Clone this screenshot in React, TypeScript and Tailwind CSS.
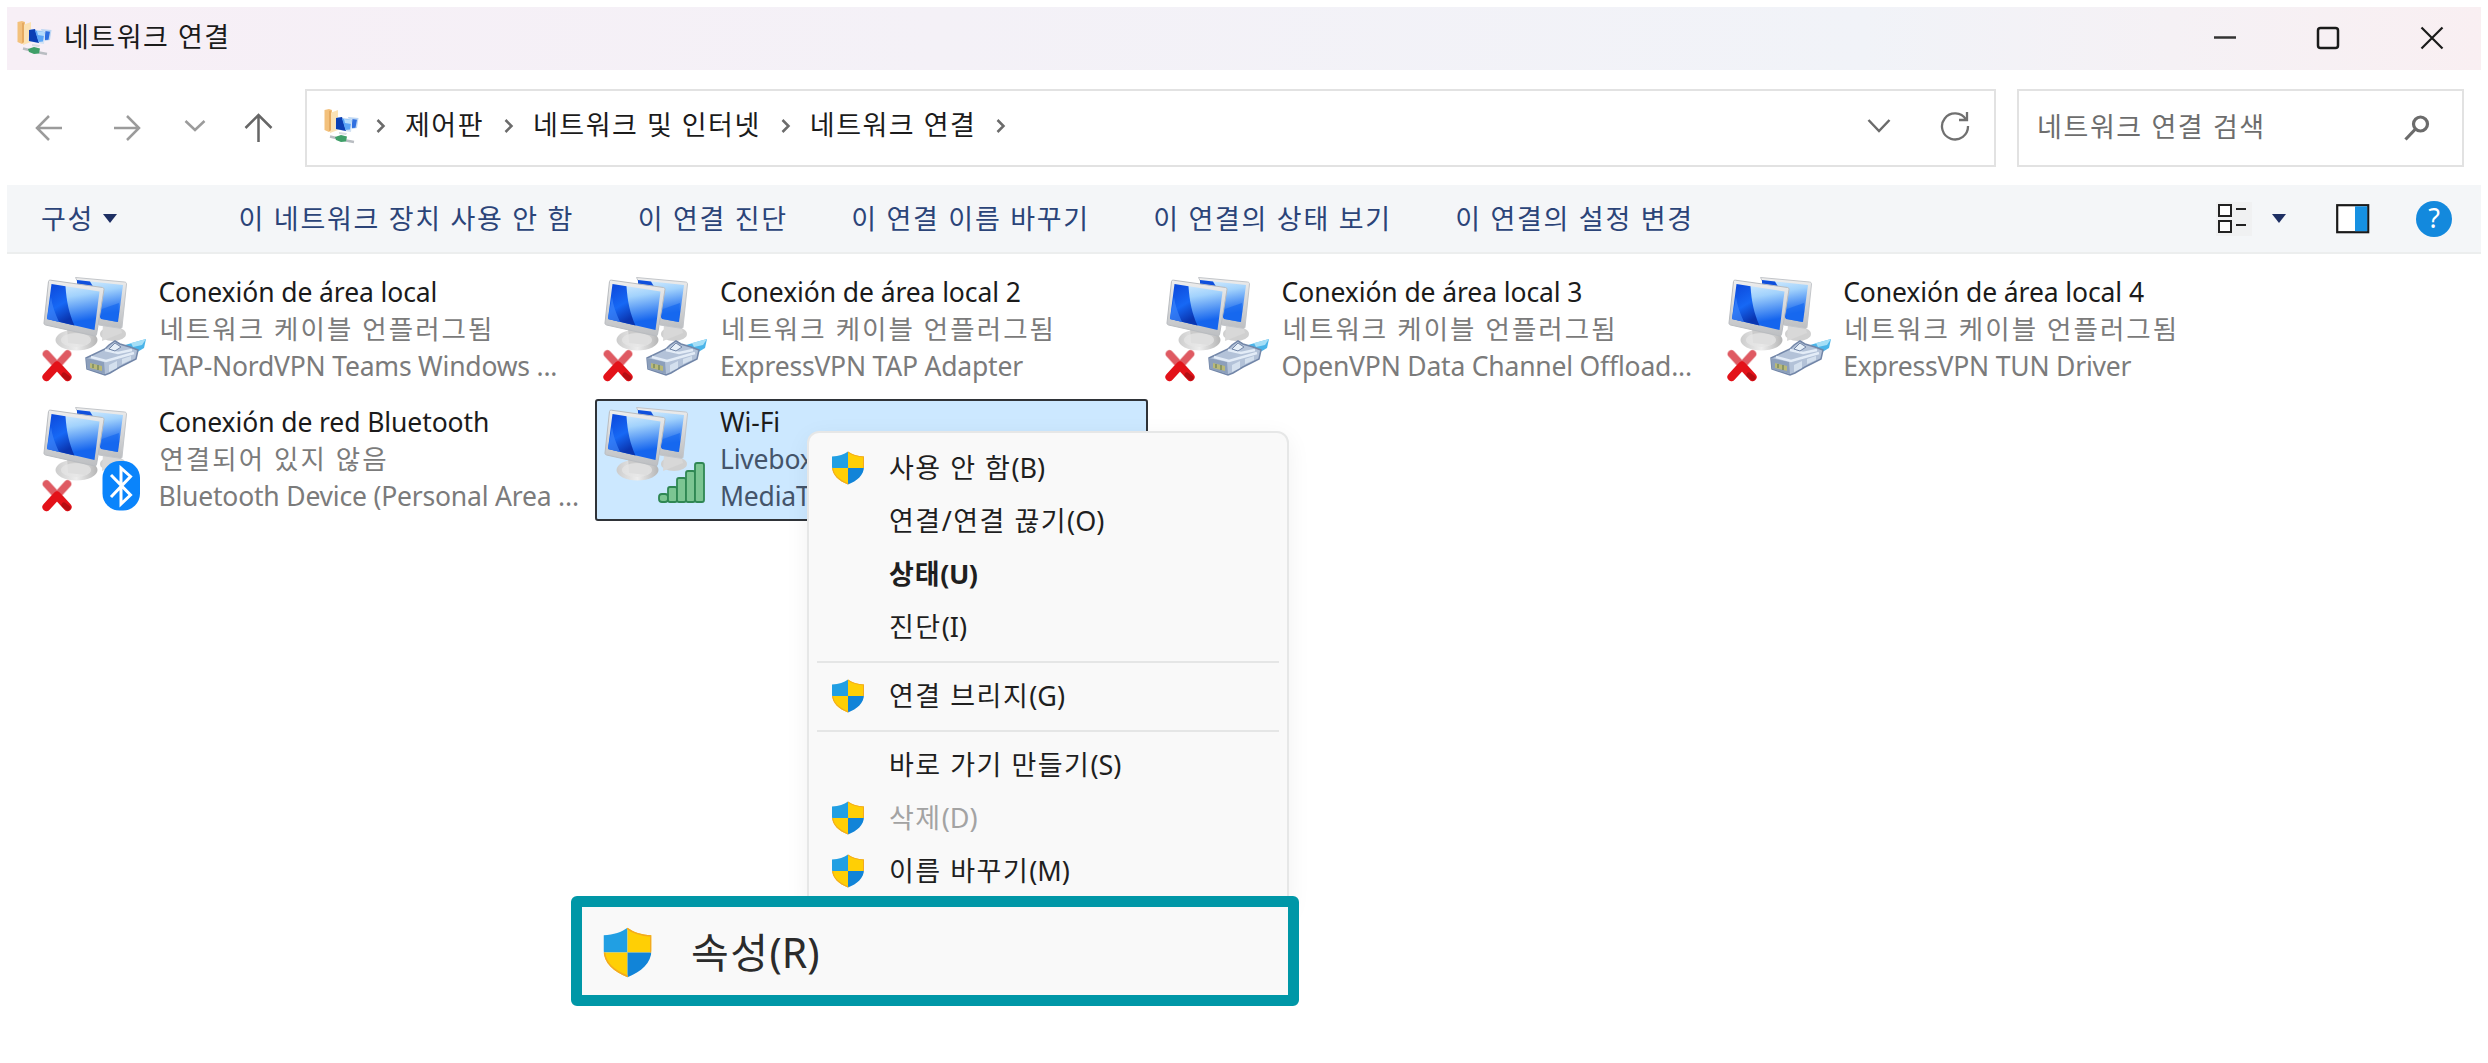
import React from "react";

const FolderIcon = () => (
    <svg width="36" height="36" viewBox="0 0 36 36">
        <path d="M.500 2l4.500-1 3 1v20l-3 2-4.500-2z" fill="#f3c17c"/>
        <path d="M6 5l8-3v20l-8 3z" fill="#fbe2b4"/>
        <path d="M5 3l2-.4v19.8L5 23z" fill="#e5aa60"/>
        <path d="M24 9l10.500 1-1.500 10-5 1z" fill="#bcd6f3"/>
        <path d="M28 11l5 .700-1.500 8-3.500.300z" fill="#2f6fe0"/>
        <path d="M13 9l15.500 2-1.500 13-7-1-9-2z" fill="#d3e2f4"/>
        <path d="M12 10l6-1 4 14-10-2z" fill="#0a3fb4"/>
        <path d="M18 10.500l9.500 1.500-1.500 9.500-4.500.500z" fill="#5aa5f7"/>
        <path d="M20 11l7.500 1-.500 4-6-1z" fill="#b5dcfc"/>
        <path d="M15 24l8 1-1 2-7-1z" fill="#d9dde2"/>
        <path d="M6 28.500l6 1.500M22 32.500l8 1.500" stroke="#b9bdc2" strokeWidth="2.500"/>
        <path d="M11 29l6-2 6 1.500-1 5-5 .500-5-2z" fill="#3f9f68"/>
    </svg>
);

const Shield = ({size}: { size: number }) => (
    <svg width={size} height={size} viewBox="0 0 34 34">
        <defs>
            <clipPath id="shield">
                <path d="M17 .500c4 3 9 4.500 16 5v10c0 8.500-7 14.500-16 18C8 30 1 24 1 15.500v-10c7-.500 12-2 16-5z"/>
            </clipPath>
        </defs>
        <g clipPath="url(#shield)">
            <path d="M0 0h17v17H0z" fill="#219fe3"/>
            <path d="M17 0h17v17H17z" fill="#ffcf05"/>
            <path d="M0 17h17v17H0z" fill="#ffcf05"/>
            <path d="M17 17h17v17H17z" fill="#1184d8"/>
            <path d="M17 .500c4 3 9 4.500 16 5v11.500" fill="none" stroke="#f2a922" strokeWidth="2"/>
            <path d="M1 17C1.500 25 8 30 17 33.500" fill="none" stroke="#f2a922" strokeWidth="2.500"/>
        </g>
    </svg>
);

const Computers = () => (
    <>
        <defs>
            <linearGradient id="screen" x1="0" y1="0" x2=".2" y2="1">
                <stop offset="0" stopColor="#d9efff"/>
                <stop offset=".35" stopColor="#a2d2fc"/>
                <stop offset=".9" stopColor="#1565ee"/>
            </linearGradient>
            <linearGradient id="shade" x1="0" y1="0" x2=".4" y2="1">
                <stop offset="0" stopColor="#0b45d8"/>
                <stop offset=".6" stopColor="#1668f5"/>
                <stop offset="1" stopColor="#0a35b0"/>
            </linearGradient>
            <linearGradient id="stand" x1="0" y1="0" x2="1" y2="0">
                <stop offset="0" stopColor="#cccccc"/>
                <stop offset=".5" stopColor="#ededed"/>
                <stop offset="1" stopColor="#b5b5b5"/>
            </linearGradient>
            <linearGradient id="frame" x1="0" y1="0" x2="0" y2="1">
                <stop offset="0" stopColor="#eeeeee"/>
                <stop offset="1" stopColor="#bdbfc2"/>
            </linearGradient>
        </defs>
        <ellipse cx="72" cy="61" rx="13" ry="7" fill="#d0d0d0"/>
        <path d="M62 50l17 2 2 8-20 8z" fill="#d8d8d8"/>
        <path d="M34.500 4.500l49 4.500c1.500.200 2 1 2 2l-4.500 43c0 1-1 1.500-2 1.300L58 52z" fill="url(#frame)" stroke="#c3c6ca"/>
        <path d="M36 7l46 5-5 37-17-3z" fill="url(#screen)"/>
        <path d="M36 7l13 1.500 3 5L36 12z" fill="#0f4fdc"/>
        <path d="M61 36l17-6-2 19-15-3z" fill="#176af0" fillOpacity=".7"/>
        <ellipse cx="35.500" cy="67" rx="21" ry="10.500" fill="url(#stand)"/>
        <path d="M26 54l22 4-3 14-18-2z" fill="#cbcbcb"/>
        <ellipse cx="35" cy="67" rx="15" ry="7" fill="#e6e6e6" fillOpacity=".7"/>
        <path d="M7.500 8.500c.100-1 1-1.500 2-1.300l52 7.300c1 .200 1.600 1 1.500 2l-7.500 45c-.200 1-1 1.600-2 1.400L4.500 52c-1-.300-1.600-1-1.500-2z" fill="url(#frame)" stroke="#b9bcc0"/>
        <path d="M10.500 11l48 7.500-5 38.500L6 46z" fill="url(#screen)"/>
        <path d="M10.500 11l14 2.200c1 15 3.500 27 9 39.300L6 46z" fill="url(#shade)"/>
        <path d="M10 24c1 8 4 16 8 25L6 46z" fill="#3c83f8" fillOpacity=".7"/>
    </>
);

const Cross = () => (
    <>
        <path d="M5.500 81l21 23M26.500 81l-21 23" stroke="#eeb0b3" strokeWidth="8.500" strokeLinecap="round"/>
        <path d="M5.500 81l21 23M26.500 81l-21 23" stroke="#df5a62" strokeWidth="7" strokeLinecap="round"/>
        <path d="M16 92.500l10.500 11.500M16 92.500l-10.500 11.500" stroke="#e31219" strokeWidth="8" strokeLinecap="round"/>
        <path d="M23 102l4 3" stroke="#b50d12" strokeWidth="5" strokeLinecap="round"/>
    </>
);

const Plug = () => (
    <>
        <path d="M84 72l21-6-2 9-10 6z" fill="#4ab4e9"/>
        <path d="M90 70l15-4-4 6-9 2z" fill="#a5dff7"/>
        <path d="M45 85l19-9 4-4 6-4 5 3 10 3 8 3-2 9-10 5-6 3-10 6-5 2-18-6z" fill="#b3c2d8" stroke="#7286a8" strokeWidth="1.500"/>
        <path d="M45 85l18 4 1 12-18-5z" fill="#8c9fbb"/>
        <path d="M64 77l13 3 14-3M50 84l15 4 28-8" stroke="#e3ecf7" strokeWidth="2.500" fill="none"/>
        <path d="M68 92l8-4v7l-8 4zM81 86l9-3v4l-9 4z" fill="#d4e0ee"/>
        <path d="M68 76l6-6 6 4-6 4z" fill="#e6eff8" stroke="#7286a8"/>
        <path d="M49 90l12 3v5L49 95z" fill="#b9b978"/>
        <path d="M52 91v4M57 92v5" stroke="#7a8a60" strokeWidth="1.500"/>
    </>
);

const Bluetooth = () => (
    <>
        <rect x="61.500" y="58" width="37.500" height="49.500" rx="17" fill="#0a84fb"/>
        <path d="M70 72l19.500 20L80 101V65l9.500 8.500L70 94" fill="none" stroke="#fff" strokeWidth="3"/>
    </>
);

const Signal = () => (
    <g fill="#7cc592" stroke="#2f8753" strokeWidth="1.800">
        <rect x="57" y="91" width="9" height="8" rx="3"/>
        <rect x="66" y="84" width="9" height="15" rx="2"/>
        <rect x="75" y="75" width="9" height="24" rx="2"/>
        <rect x="84" y="68" width="9" height="31" rx="2"/>
        <rect x="93" y="60" width="9" height="39" rx="2"/>
    </g>
);

const connections = [
    {name: "Conexión de área local", status: "네트워크 케이블 언플러그됨", device: "TAP-NordVPN Teams Windows ...", kind: "plug"},
    {name: "Conexión de área local 2", status: "네트워크 케이블 언플러그됨", device: "ExpressVPN TAP Adapter", kind: "plug"},
    {name: "Conexión de área local 3", status: "네트워크 케이블 언플러그됨", device: "OpenVPN Data Channel Offload...", kind: "plug"},
    {name: "Conexión de área local 4", status: "네트워크 케이블 언플러그됨", device: "ExpressVPN TUN Driver", kind: "plug"},
    {name: "Conexión de red Bluetooth", status: "연결되어 있지 않음", device: "Bluetooth Device (Personal Area ...", kind: "bluetooth"},
    {name: "Wi-Fi", status: "Livebox", device: "MediaT", kind: "wifi"},
];

const Connection = ({item}: { item: typeof connections[number] }) => {
    const selected = item.kind === "wifi";
    return (
        <div className={selected
            ? "flex h-[122px] w-[553px] rounded-[3px] border-2 border-[#2f3338] bg-[#cce8ff] pl-[5.500px] pt-[2px]"
            : "flex h-[122px] w-[553px] rounded-[3px] border-2 border-transparent pl-[5.500px] pt-[2px]"}>
            <svg width="117.500" height="114" viewBox="0 0 117.500 114" className="shrink-0">
                <Computers/>
                {item.kind !== "wifi" && <Cross/>}
                {item.kind === "plug" && <Plug/>}
                {item.kind === "bluetooth" && <Bluetooth/>}
                {item.kind === "wifi" && <Signal/>}
            </svg>
            <div className="whitespace-nowrap pt-px text-[26.500px] leading-[37px] tracking-[-0.2px]">
                <div className="tracking-[-0.1px] text-[#1b1b1b]">{item.name}</div>
                <div className={selected ? "text-[#44546a]" : "pl-px tracking-[2.05px] text-[#7b7b7b]"}>{item.status}</div>
                <div className={selected ? "text-[#44546a]" : "text-[#7b7b7b]"}>{item.device}</div>
            </div>
        </div>
    );
};

const MenuItem = ({label, hotkey, shield, bold, disabled}: {
    label: string, hotkey: string, shield?: boolean, bold?: boolean, disabled?: boolean
}) => (
    <div className={"flex h-[53px] items-center pl-[22px] " + (disabled ? "text-[#a3a3a3]" : "text-[#1f1f1f]") + (bold ? " font-bold" : "")}>
        <div className="w-[58px] pb-0.5">{shield && <Shield size={34}/>}</div>
        <span className={bold ? "tracking-[0.8px]" : "tracking-[1.5px]"}>{label}</span>
        <span className={bold ? "tracking-[-0.5px]" : ""}>({hotkey})</span>
    </div>
);

const Separator = () => <div className="mx-2 my-[7px] h-[2px] bg-[#e5e6e6]"/>;

const Crumb = ({label}: { label: string }) => (
    <>
        <svg width="10" height="16" viewBox="0 0 10 16" fill="none" stroke="#6b6b6b" strokeWidth="2.500">
            <path d="M1.500 2l6 6-6 6"/>
        </svg>
        {label && <span className="ml-[19px] mr-5">{label}</span>}
    </>
);

const commands = ["이 네트워크 장치 사용 안 함", "이 연결 진단", "이 연결 이름 바꾸기", "이 연결의 상태 보기", "이 연결의 설정 변경"];

export default function App() {
    return (
        <div className="relative h-[1063px] w-[2488px] overflow-hidden bg-white px-[7px] pt-[7px] font-['Noto_Sans','Noto_Sans_CJK_KR',sans-serif] text-[27px]">
            <header className="flex h-[63px] items-center bg-linear-to-r from-[#f7eff6] via-[#f1f3f8] via-75% to-[#f9eff2] pb-[2px] pl-[10px] pr-[37px]">
                <FolderIcon/>
                <h1 className="mb-px ml-[11px] grow tracking-[1.5px] text-[#1b1b1b]">네트워크 연결</h1>
                <svg width="24" height="24" viewBox="0 0 24 24" className="mr-[79px]" stroke="#333" strokeWidth="2.500">
                    <path d="M1 11.500h22"/>
                </svg>
                <svg width="24" height="24" viewBox="0 0 24 24" className="mr-[80px]" fill="none" stroke="#1a1a1a" strokeWidth="2.500">
                    <rect x="2" y="2" width="20" height="20" rx="2.500"/>
                </svg>
                <svg width="24" height="24" viewBox="0 0 24 24" stroke="#1a1a1a" strokeWidth="2.200">
                    <path d="M1.500 1.500l21 21M22.500 1.500l-21 21"/>
                </svg>
            </header>

            <div className="flex h-[115px] items-center pl-[28px] pr-[17px]">
                <svg width="242" height="30" viewBox="0 0 242 30" fill="none" stroke="#9b9b9b" strokeWidth="2.500" className="mr-7">
                    <path d="M27 15H2M14 3L2 15l12 12M79 15h25M92 3l12 12-12 12M150.500 8l9.500 9 9.500-9"/>
                    <path d="M223.500 29V2M210.500 15l13-13 13 13" stroke="#666"/>
                </svg>
                <div className="flex h-[78px] w-[1691px] items-center border-2 border-[#e2e2e2] pb-[4px] pl-[17px] pr-[24px] text-[#1b1b1b]">
                    <FolderIcon/>
                    <div className="ml-4 flex grow items-center tracking-[1.5px]">
                        <Crumb label="제어판"/>
                        <Crumb label="네트워크 및 인터넷"/>
                        <Crumb label="네트워크 연결"/>
                        <Crumb label=""/>
                    </div>
                    <svg width="24" height="16" viewBox="0 0 24 16" fill="none" stroke="#6b6b6b" strokeWidth="2.500" className="mr-[49px]">
                        <path d="M1.500 2L12 13 22.500 2"/>
                    </svg>
                    <svg width="30" height="30" viewBox="0 0 30 30" fill="none" stroke="#707070" strokeWidth="2.300">
                        <path d="M26 8.500A13 13 0 1 0 28 15M27 1v8h-8"/>
                    </svg>
                </div>
                <div className="ml-[21px] flex h-[78px] w-[447px] items-center justify-between border-2 border-[#e2e2e2] pl-[18px] pr-[32px] text-[#6d6d6d]">
                    <span className="tracking-[1.6px]">네트워크 연결 검색</span>
                    <svg width="26" height="26" viewBox="0 0 26 26" fill="none" stroke="#6b6b6b" strokeWidth="3.200">
                        <circle cx="16.500" cy="9" r="7"/>
                        <path d="M11.500 14L1.500 24.500"/>
                    </svg>
                </div>
            </div>

            <nav className="flex h-[69px] items-center border-b-2 border-[#eceeee] bg-[#f4f6f8] pl-[34px] pr-[29px] tracking-[1.7px] text-[#2b4478]">
                <span className="pt-px">구성</span>
                <svg width="16" height="10" viewBox="0 0 16 10" className="ml-2 mr-[120.500px]"><path d="M1 0h14L8 9z" fill="#1e2f63"/></svg>
                <div className="flex grow gap-[63.500px] pt-px">
                    {commands.map((c) => <span key={c}>{c}</span>)}
                </div>
                <svg width="36" height="34" viewBox="0 0 36 34" className="mr-[19px] bg-[#f0f1f2]" fill="#fff" stroke="#222" strokeWidth="2">
                    <rect x="3" y="3" width="12" height="11"/>
                    <rect x="3" y="19" width="12" height="11"/>
                    <path d="M20 7h10M20 23h10"/>
                </svg>
                <svg width="16" height="10" viewBox="0 0 16 10" className="mr-[49px]"><path d="M1 0h14L8 9z" fill="#1e2f63"/></svg>
                <svg width="34" height="30" viewBox="0 0 34 30" className="mr-[46px]">
                    <rect x="1.200" y="1.200" width="31" height="27" fill="#fff" stroke="#1a1a1a" strokeWidth="2.200"/>
                    <path d="M19 2.300h12.200v24.900H19z" fill="#1691e2"/>
                </svg>
                <div className="flex size-9 items-center justify-center rounded-full bg-[#1389dd] font-['Noto_Sans'] text-[27px] tracking-normal text-white">?</div>
            </nav>

            <main className="grid grid-cols-[repeat(4,561.600px)] gap-y-[8.500px] pl-[26.400px] pt-[14.500px]">
                {connections.map((item) => <Connection key={item.name} item={item}/>)}
            </main>

            <div className="absolute left-[807px] top-[431px] h-[480px] w-[482px] rounded-xl border-2 border-[#e6e7e7] bg-[#f9f9f9] pt-[9px] shadow-[0_6px_24px_rgba(0,0,0,0.06)]">
                <MenuItem label="사용 안 함" hotkey="B" shield/>
                <MenuItem label="연결/연결 끊기" hotkey="O"/>
                <MenuItem label="상태" hotkey="U" bold/>
                <MenuItem label="진단" hotkey="I"/>
                <Separator/>
                <MenuItem label="연결 브리지" hotkey="G" shield/>
                <Separator/>
                <MenuItem label="바로 가기 만들기" hotkey="S"/>
                <MenuItem label="삭제" hotkey="D" shield disabled/>
                <MenuItem label="이름 바꾸기" hotkey="M" shield/>
            </div>

            <div className="absolute left-[571px] top-[896px] flex h-[110px] w-[728px] items-center rounded-md border-[11px] border-[#0097a7] bg-[#f9f9f9] pl-[20px] pt-[3px] text-[41px] text-[#2b2b2b]">
                <Shield size={51}/>
                <span className="ml-[38px] tracking-[1.5px]">속성</span>
                <span>(R)</span>
            </div>
        </div>
    );
}
